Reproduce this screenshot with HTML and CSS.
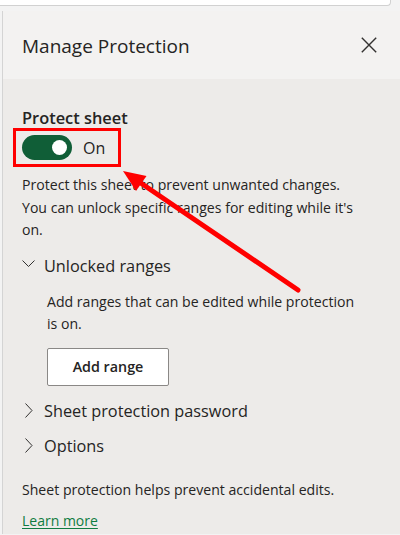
FILE: index.html
```html
<!DOCTYPE html>
<html lang="en">
<head>
<meta charset="utf-8">
<title>Manage Protection</title>
<link rel="stylesheet" href="styles.css">
</head>
<body>
<div class="topbar"></div>
<div class="pane">
  <header class="head">
    <h1 class="title">Manage Protection</h1>
    <button class="close" aria-label="Close">
      <svg width="16" height="16" viewBox="0 0 16 16"><path d="M0.8 0.8 L15.2 15.2 M15.2 0.8 L0.8 15.2" stroke="#323130" stroke-width="1.4" fill="none"/></svg>
    </button>
  </header>
  <main class="content">
    <h2 class="subtitle">Protect sheet</h2>
    <div class="toggle-row">
      <span class="toggle"><span class="knob"></span></span>
      <span class="toggle-label">On</span>
    </div>
    <p class="desc">Protect this sheet to prevent unwanted changes. You can unlock specific ranges for editing while it's on.</p>

    <section class="section">
      <div class="sec-head">
        <svg class="chev-down" width="13" height="7" viewBox="0 0 13 7"><polyline points="0.5,0.5 6.5,6.5 12.5,0.5" fill="none" stroke="#323130" stroke-width="1"/></svg>
        <span>Unlocked ranges</span>
      </div>
      <div class="sec-body">
        <p class="sec-text">Add ranges that can be edited while protection is on.</p>
        <button class="btn">Add range</button>
      </div>
    </section>

    <div class="sec-head collapsed first">
      <svg class="chev-right" width="8" height="15" viewBox="0 0 8 15"><polyline points="0.5,0.5 7,7.5 0.5,14.5" fill="none" stroke="#323130" stroke-width="1"/></svg>
      <span>Sheet protection password</span>
    </div>
    <div class="sec-head collapsed">
      <svg class="chev-right" width="8" height="15" viewBox="0 0 8 15"><polyline points="0.5,0.5 7,7.5 0.5,14.5" fill="none" stroke="#323130" stroke-width="1"/></svg>
      <span>Options</span>
    </div>

    <p class="note">Sheet protection helps prevent accidental edits.</p>
    <a class="link" href="#">Learn more</a>
  </main>
</div>

<svg class="annot" width="400" height="535" viewBox="0 0 400 535">
  <rect x="14.5" y="129.5" width="105" height="36" fill="none" stroke="#ff0000" stroke-width="3"/>
  <line x1="298" y1="290" x2="140" y2="182.5" stroke="#ff0000" stroke-width="5" stroke-linecap="round"/>
  <polygon points="123,171 146.5,176 136,191" fill="#ff0000"/>
</svg>
</body>
</html>
```
FILE: styles.css
```css
html, body {
  margin: 0;
  padding: 0;
  width: 400px;
  height: 535px;
  overflow: hidden;
}

body {
  background: #f3f3f3;
  font-family: "Open Sans", "Noto Sans", sans-serif;
  color: #252423;
  position: relative;
}

.topbar {
  width: 390px;
  height: 5px;
  background: #ffffff;
  border-right: 1px solid #d1d1d1;
  border-bottom: 1px solid #d1d1d1;
  border-bottom-right-radius: 4px;
}

.pane {
  margin-top: 5px;
  margin-left: 2px;
  border-left: 1px solid #d4d4d4;
  height: 523px;
  display: flex;
  flex-direction: column;
}

.head {
  height: 68px;
  background: #f3f2f1;
  display: flex;
  align-items: center;
  justify-content: space-between;
  padding: 0 23px 0 19px;
}

.title {
  margin: 0;
  font-size: 19px;
  font-weight: 500;
  line-height: 26px;
  margin-top: 1px;
}

.close {
  border: 0;
  background: none;
  padding: 0;
  width: 16px;
  height: 16px;
  display: flex;
}

.content {
  flex: 1;
  background: #edebe9;
  padding: 27px 38px 0 19px;
}

.subtitle {
  margin: 0;
  font-size: 16.4px;
  font-weight: 600;
  line-height: 24px;
}

.toggle-row {
  display: flex;
  align-items: center;
  gap: 11px;
  margin-top: 5px;
}

.toggle {
  width: 50px;
  height: 25px;
  border-radius: 13px;
  background: #105e37;
  display: flex;
  align-items: center;
  justify-content: flex-end;
  padding-right: 5px;
  box-sizing: border-box;
}

.knob {
  width: 15px;
  height: 15px;
  border-radius: 50%;
  background: #ffffff;
}

.toggle-label {
  font-size: 16px;
  line-height: 24px;
}

.desc {
  margin: 14px 0 0 0;
  font-size: 14.1px;
  line-height: 22.5px;
}

.sec-head {
  display: flex;
  align-items: center;
  font-size: 16.3px;
  line-height: 26px;
}

.section .sec-head {
  margin-top: 11px;
}

.chev-down {
  margin-right: 9px;
  margin-bottom: 5px;
}

.chev-right {
  margin-left: 3px;
  margin-right: 11px;
}

.sec-body {
  padding-left: 25px;
}

.sec-text {
  margin: 12px 0 0 0;
  font-size: 14.1px;
  line-height: 22.5px;
}

.btn {
  margin-top: 12px;
  width: 122px;
  height: 38px;
  background: #ffffff;
  border: 1px solid #8a8886;
  border-radius: 2px;
  font-family: "Open Sans", "Noto Sans", sans-serif;
  font-size: 14.3px;
  font-weight: 600;
  color: #252423;
  padding: 0;
}

.collapsed.first {
  margin-top: 12px;
}

.collapsed + .collapsed {
  margin-top: 9px;
}

.note {
  margin: 20px 0 0 0;
  font-size: 14.1px;
  line-height: 22.5px;
}

.link {
  display: inline-block;
  margin-top: 9px;
  font-size: 14px;
  line-height: 22.5px;
  color: #107c41;
  text-decoration: underline;
  text-underline-offset: 2px;
}

.annot {
  position: absolute;
  top: 0;
  left: 0;
  pointer-events: none;
}
```
